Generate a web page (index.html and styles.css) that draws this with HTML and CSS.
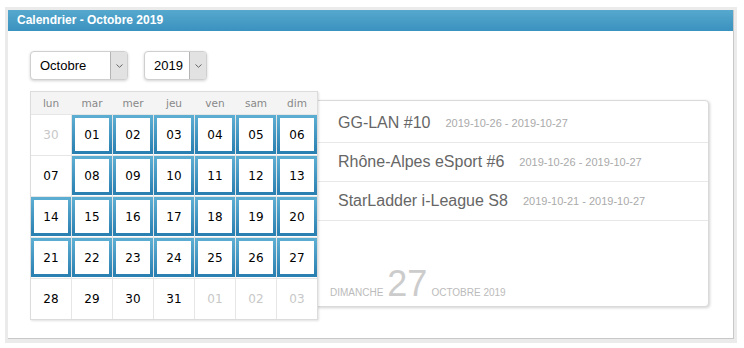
FILE: index.html
```html
<!DOCTYPE html>
<html lang="fr">
<head>
<meta charset="utf-8">
<title>Calendrier</title>
<link rel="stylesheet" href="styles.css">
</head>
<body>
<div class="frame">
  <div class="panel">
    <div class="panel-head">Calendrier - Octobre 2019</div>
    <div class="panel-body">
      <div class="selects">
        <div class="select select-month"><span class="select-val">Octobre</span><span class="select-btn"><svg width="7" height="4" viewBox="0 0 7 4"><polyline points="0.5,0.5 3.5,3.3 6.5,0.5" fill="none" stroke="#666" stroke-width="1"/></svg></span></div>
        <div class="select select-year"><span class="select-val">2019</span><span class="select-btn"><svg width="7" height="4" viewBox="0 0 7 4"><polyline points="0.5,0.5 3.5,3.3 6.5,0.5" fill="none" stroke="#666" stroke-width="1"/></svg></span></div>
      </div>
      <div class="main">
        <div class="cal">
          <div class="cal-head">
            <span>lun</span><span>mar</span><span>mer</span><span>jeu</span><span>ven</span><span>sam</span><span>dim</span>
          </div>
          <div class="cal-grid">
            <div class="day other">30</div>
            <div class="day ev"><span>01</span></div>
            <div class="day ev"><span>02</span></div>
            <div class="day ev"><span>03</span></div>
            <div class="day ev"><span>04</span></div>
            <div class="day ev"><span>05</span></div>
            <div class="day ev"><span>06</span></div>
            <div class="day">07</div>
            <div class="day ev"><span>08</span></div>
            <div class="day ev"><span>09</span></div>
            <div class="day ev"><span>10</span></div>
            <div class="day ev"><span>11</span></div>
            <div class="day ev"><span>12</span></div>
            <div class="day ev"><span>13</span></div>
            <div class="day ev"><span>14</span></div>
            <div class="day ev"><span>15</span></div>
            <div class="day ev"><span>16</span></div>
            <div class="day ev"><span>17</span></div>
            <div class="day ev"><span>18</span></div>
            <div class="day ev"><span>19</span></div>
            <div class="day ev"><span>20</span></div>
            <div class="day ev"><span>21</span></div>
            <div class="day ev"><span>22</span></div>
            <div class="day ev"><span>23</span></div>
            <div class="day ev"><span>24</span></div>
            <div class="day ev"><span>25</span></div>
            <div class="day ev"><span>26</span></div>
            <div class="day ev"><span>27</span></div>
            <div class="day">28</div>
            <div class="day">29</div>
            <div class="day">30</div>
            <div class="day">31</div>
            <div class="day other">01</div>
            <div class="day other">02</div>
            <div class="day other">03</div>
          </div>
        </div>
        <div class="events">
          <div class="event"><span class="ev-title">GG-LAN #10</span><span class="ev-date">2019-10-26 - 2019-10-27</span></div>
          <div class="event"><span class="ev-title">Rhône-Alpes eSport #6</span><span class="ev-date">2019-10-26 - 2019-10-27</span></div>
          <div class="event"><span class="ev-title">StarLadder i-League S8</span><span class="ev-date">2019-10-21 - 2019-10-27</span></div>
          <div class="today">
            <span class="today-small">DIMANCHE</span><span class="today-num">27</span><span class="today-small">OCTOBRE 2019</span>
          </div>
        </div>
      </div>
    </div>
  </div>
</div>
</body>
</html>
```

FILE: styles.css
```css
html, body {
  margin: 0;
  padding: 0;
  background: #fff;
}
body {
  padding: 7px 0 0 5px;
  font-family: "Liberation Sans", Arial, sans-serif;
}
.frame {
  width: 726px;
  padding: 3px 3px 4px 3px;
  background: #ebebeb;
}
.panel {
  height: 328px;
  background: #fff;
  border-right: 1px solid #c8c8c8;
  border-bottom: 1px solid #c8c8c8;
}
.panel-head {
  height: 21px;
  line-height: 21px;
  padding-left: 9px;
  color: #fff;
  font-weight: bold;
  font-size: 12px;
  background: linear-gradient(#56a8cd, #3a92bf);
}
.panel-body {
  padding: 20px 0 0 22px;
}
.selects {
  display: flex;
  gap: 16px;
  height: 29px;
}
.select {
  display: flex;
  box-sizing: border-box;
  height: 29px;
  border: 1px solid #cfcfcf;
  border-radius: 4px;
  box-shadow: 0 1px 3px rgba(0,0,0,0.18);
  background: #fff;
  font-size: 13px;
  color: #000;
}
.select-month { width: 98px; }
.select-year { width: 63px; }
.select-val {
  flex: 1;
  line-height: 27px;
  padding-left: 9px;
}
.select-btn {
  width: 16px;
  display: flex;
  align-items: center;
  justify-content: center;
  background: #e2e2e2;
  border-left: 1px solid #b4b4b4;
  border-radius: 0 3px 3px 0;
}
.main {
  display: flex;
  align-items: flex-start;
  margin-top: 11px;
}
.cal {
  position: relative;
  z-index: 2;
  width: 286px;
  border: 1px solid #dcdcdc;
  box-shadow: 1px 1px 2px rgba(0,0,0,0.12);
  background: #e6e6e6;
  font-family: "DejaVu Sans", Verdana, sans-serif;
}
.cal-head {
  display: grid;
  grid-template-columns: repeat(7, 40px);
  column-gap: 1px;
  height: 22px;
  background: #f4f4f4;
  border-bottom: 1px solid #e6e6e6;
}
.cal-head span {
  text-align: center;
  line-height: 22px;
  font-size: 10.5px;
  color: #888;
}
.cal-grid {
  display: grid;
  grid-template-columns: repeat(7, 40px);
  grid-auto-rows: 40px;
  gap: 1px;
}
.day {
  background: #fff;
  display: flex;
  align-items: center;
  justify-content: center;
  font-size: 12px;
  color: #000;
}
.day.other { color: #c8c8c8; }
.day.ev span {
  box-sizing: border-box;
  width: 40px;
  height: 39px;
  display: flex;
  align-items: center;
  justify-content: center;
  border: 3px solid #4a9fc8;
  border-image: linear-gradient(#5cadd2, #2a80b1) 1;
}
.day.ev { align-items: flex-start; }
.events {
  box-sizing: border-box;
  width: 392px;
  height: 207px;
  margin-top: 9px;
  margin-left: -1px;
  padding-top: 3px;
  display: flex;
  flex-direction: column;
  border: 1px solid #dadada;
  border-radius: 0 4px 4px 0;
  box-shadow: 1px 1px 3px rgba(0,0,0,0.18);
  background: #fff;
}
.event {
  height: 38px;
  display: flex;
  align-items: center;
  padding-left: 20px;
  border-bottom: 1px solid #e8e8e8;
}
.ev-title {
  font-size: 16px;
  color: #666;
}
.ev-date {
  margin-left: 15px;
  font-size: 11px;
  color: #aaa;
}
.today {
  margin-top: auto;
  padding: 0 0 4px 12px;
  display: flex;
  align-items: baseline;
  color: #c4c4c4;
}
.today-small {
  font-size: 10px;
  color: #bbb;
}
.today-num {
  font-size: 36px;
  line-height: 36px;
  margin: 0 4px 0 4px;
  color: #ccc;
}
```
